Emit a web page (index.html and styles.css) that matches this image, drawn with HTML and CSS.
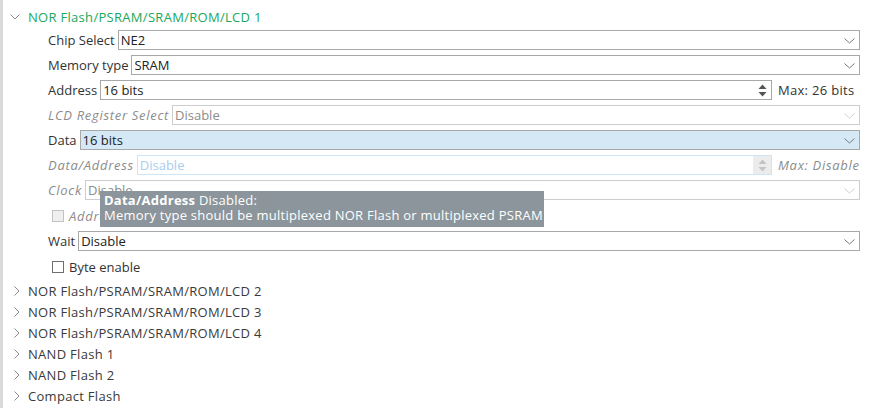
FILE: index.html
```html
<!DOCTYPE html>
<html>
<head>
<meta charset="utf-8">
<link rel="stylesheet" href="styles.css">
</head>
<body>
<div class="panel">
  <div class="node open">
    <svg class="twisty" width="10" height="6" viewBox="0 0 10 6"><path d="M0.5 0.5 L5 5 L9.5 0.5" fill="none" stroke="#8a8a8a" stroke-width="1"/></svg>
    <span class="title">NOR Flash/PSRAM/SRAM/ROM/LCD 1</span>
  </div>
  <div class="fields">
    <div class="row">
      <span class="lbl">Chip Select</span>
      <div class="box"><span class="val">NE2</span><svg class="chev" width="11" height="6" viewBox="0 0 11 6"><path d="M0.5 0.5 L5.5 5 L10.5 0.5" fill="none" stroke="#7a7a7a"/></svg></div>
    </div>
    <div class="row">
      <span class="lbl">Memory type</span>
      <div class="box"><span class="val">SRAM</span><svg class="chev" width="11" height="6" viewBox="0 0 11 6"><path d="M0.5 0.5 L5.5 5 L10.5 0.5" fill="none" stroke="#7a7a7a"/></svg></div>
    </div>
    <div class="row">
      <span class="lbl">Address</span>
      <div class="box spin"><span class="val">16 bits</span>
        <span class="spinner"><svg width="9" height="13" viewBox="0 0 9 13"><path d="M4.5 0.5 L8.5 5 L0.5 5 Z" fill="#555"/><path d="M4.5 12.5 L8.5 8 L0.5 8 Z" fill="#555"/></svg></span>
      </div>
      <span class="max">Max: 26 bits</span>
    </div>
    <div class="row dis">
      <span class="lbl">LCD Register Select</span>
      <div class="box"><span class="val">Disable</span><svg class="chev" width="11" height="6" viewBox="0 0 11 6"><path d="M0.5 0.5 L5.5 5 L10.5 0.5" fill="none" stroke="#cfcfcf"/></svg></div>
    </div>
    <div class="row">
      <span class="lbl">Data</span>
      <div class="box sel"><span class="val">16 bits</span><svg class="chev" width="11" height="6" viewBox="0 0 11 6"><path d="M0.5 0.5 L5.5 5 L10.5 0.5" fill="none" stroke="#7a7a7a"/></svg></div>
    </div>
    <div class="row dis">
      <span class="lbl">Data/Address</span>
      <div class="box spin blue"><span class="val">Disable</span>
        <span class="spinner off"><svg width="9" height="13" viewBox="0 0 9 13"><path d="M4.5 0.5 L8.5 5 L0.5 5 Z" fill="#c4c4c4"/><path d="M4.5 12.5 L8.5 8 L0.5 8 Z" fill="#c4c4c4"/></svg></span>
      </div>
      <span class="max">Max: Disable</span>
    </div>
    <div class="row dis">
      <span class="lbl">Clock</span>
      <div class="box"><span class="val">Disable</span><svg class="chev" width="11" height="6" viewBox="0 0 11 6"><path d="M0.5 0.5 L5.5 5 L10.5 0.5" fill="none" stroke="#cfcfcf"/></svg></div>
    </div>
    <div class="check dis">
      <span class="cb"></span><span class="lbl">Address/data demultiplexed</span>
    </div>
    <div class="row">
      <span class="lbl">Wait</span>
      <div class="box"><span class="val">Disable</span><svg class="chev" width="11" height="6" viewBox="0 0 11 6"><path d="M0.5 0.5 L5.5 5 L10.5 0.5" fill="none" stroke="#7a7a7a"/></svg></div>
    </div>
    <div class="check">
      <span class="cb"></span><span class="lbl">Byte enable</span>
    </div>
  </div>
  <div class="node"><svg class="twisty closed" width="6" height="10" viewBox="0 0 6 10"><path d="M0.5 0.5 L5 5 L0.5 9.5" fill="none" stroke="#8a8a8a"/></svg><span class="title">NOR Flash/PSRAM/SRAM/ROM/LCD 2</span></div>
  <div class="node"><svg class="twisty closed" width="6" height="10" viewBox="0 0 6 10"><path d="M0.5 0.5 L5 5 L0.5 9.5" fill="none" stroke="#8a8a8a"/></svg><span class="title">NOR Flash/PSRAM/SRAM/ROM/LCD 3</span></div>
  <div class="node"><svg class="twisty closed" width="6" height="10" viewBox="0 0 6 10"><path d="M0.5 0.5 L5 5 L0.5 9.5" fill="none" stroke="#8a8a8a"/></svg><span class="title">NOR Flash/PSRAM/SRAM/ROM/LCD 4</span></div>
  <div class="node"><svg class="twisty closed" width="6" height="10" viewBox="0 0 6 10"><path d="M0.5 0.5 L5 5 L0.5 9.5" fill="none" stroke="#8a8a8a"/></svg><span class="title">NAND Flash 1</span></div>
  <div class="node"><svg class="twisty closed" width="6" height="10" viewBox="0 0 6 10"><path d="M0.5 0.5 L5 5 L0.5 9.5" fill="none" stroke="#8a8a8a"/></svg><span class="title">NAND Flash 2</span></div>
  <div class="node"><svg class="twisty closed" width="6" height="10" viewBox="0 0 6 10"><path d="M0.5 0.5 L5 5 L0.5 9.5" fill="none" stroke="#8a8a8a"/></svg><span class="title">Compact Flash</span></div>

  <div class="tooltip">
    <div><b>Data/Address</b> Disabled:</div>
    <div>Memory type should be multiplexed NOR Flash or multiplexed PSRAM</div>
  </div>
</div>
</body>
</html>
```

FILE: styles.css
```css
html, body {
  margin: 0;
  padding: 0;
  background: #ffffff;
}
body {
  font-family: "Open Sans", "DejaVu Sans", sans-serif;
  font-size: 13px;
  color: #333333;
}
.panel {
  position: relative;
  width: 884px;
  height: 408px;
  border-left: 3px solid #d9d9d9;
  padding-top: 6px;
  box-sizing: border-box;
  overflow: hidden;
}
.node {
  display: flex;
  align-items: center;
  height: 21px;
  padding-left: 7px;
}
.node .twisty {
  display: block;
  margin-right: 8px;
}
.node .twisty.closed {
  margin-left: 4px;
  margin-right: 8px;
}
.node .title {
  color: #3a3a3a;
  white-space: nowrap;
  letter-spacing: 0.3px;
}
.node.open .title {
  color: #1aa85a;
}
.fields {
  padding-top: 3px;
  padding-left: 45px;
  padding-right: 24px;
  margin-bottom: 3px;
}
.row {
  display: flex;
  align-items: center;
  height: 20px;
  margin-bottom: 5px;
}
.lbl {
  white-space: nowrap;
  margin-right: 3px;
  color: #333333;
}
.box {
  flex: 1;
  height: 20px;
  box-sizing: border-box;
  border: 1px solid #a8a8a8;
  display: flex;
  align-items: center;
  background: #ffffff;
  padding-left: 2px;
  padding-right: 4px;
  color: #222222;
}
.box .val {
  flex: 1;
  white-space: nowrap;
}
.box .chev {
  display: block;
  margin-top: 1px;
}
.box.sel {
  background: #d5e8f6;
}
.box.spin {
  padding-right: 0;
}
.spinner {
  width: 18px;
  height: 18px;
  display: flex;
  align-items: center;
  justify-content: center;
}
.spinner svg {
  display: block;
}
.spinner.off {
  background: #ececec;
}
.max {
  width: 82px;
  margin-left: 6px;
  white-space: nowrap;
  color: #333333;
  letter-spacing: 0.3px;
}
.row.dis .lbl,
.row.dis .max {
  font-style: italic;
  color: #8c8c8c;
  letter-spacing: 0.7px;
}
.row.dis .box {
  border-color: #cdcdcd;
  color: #8c8c8c;
}
.row.dis .box.blue {
  border-color: #cfe4f5;
  color: #a9cdee;
}
.check {
  display: flex;
  align-items: center;
  height: 21px;
  margin-bottom: 5px;
  padding-left: 4px;
}
.check:last-child {
  margin-bottom: 0;
}
.check .cb {
  width: 12px;
  height: 12px;
  box-sizing: border-box;
  border: 1px solid #6e6e6e;
  background: #ffffff;
  margin-right: 5px;
}
.check.dis .cb {
  border-color: #c2c2c2;
  background: #efefef;
}
.check.dis .lbl {
  font-style: italic;
  color: #8c8c8c;
  letter-spacing: 0.7px;
}
.tooltip {
  position: absolute;
  left: 97px;
  top: 191px;
  width: 444px;
  height: 36px;
  box-sizing: border-box;
  background: #8b959b;
  color: #ffffff;
  padding: 2px 4px;
  line-height: 15px;
  white-space: nowrap;
  letter-spacing: 0.25px;
}
.tooltip b {
  font-weight: 700;
}
```
